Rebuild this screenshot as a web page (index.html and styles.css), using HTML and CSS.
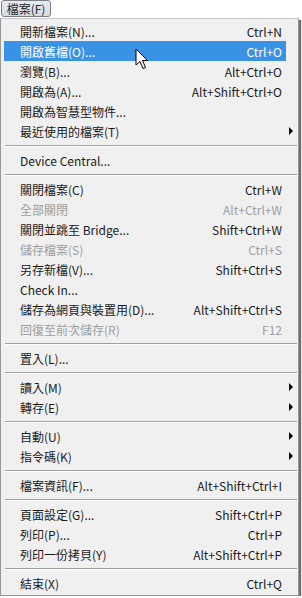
FILE: index.html
```html
<!DOCTYPE html>
<html lang="zh-Hant">
<head>
    <meta charset="UTF-8">
    <title>檔案</title>
    <link rel="stylesheet" href="styles.css">
</head>
<body>
    <div class="menubar">
        <span class="menu-title">檔案(F)</span>
    </div>

    <div class="menu">
        <div class="item"><span class="label">開新檔案(N)...</span><span class="key">Ctrl+N</span></div>
        <div class="item active"><span class="label">開啟舊檔(O)...</span><span class="key">Ctrl+O</span></div>
        <div class="item"><span class="label">瀏覽(B)...</span><span class="key">Alt+Ctrl+O</span></div>
        <div class="item"><span class="label">開啟為(A)...</span><span class="key">Alt+Shift+Ctrl+O</span></div>
        <div class="item"><span class="label">開啟為智慧型物件...</span></div>
        <div class="item sub"><span class="label">最近使用的檔案(T)</span></div>
        <div class="sep"></div>
        <div class="item"><span class="label">Device Central...</span></div>
        <div class="sep"></div>
        <div class="item"><span class="label">關閉檔案(C)</span><span class="key">Ctrl+W</span></div>
        <div class="item disabled"><span class="label">全部關閉</span><span class="key">Alt+Ctrl+W</span></div>
        <div class="item"><span class="label">關閉並跳至 Bridge...</span><span class="key">Shift+Ctrl+W</span></div>
        <div class="item disabled"><span class="label">儲存檔案(S)</span><span class="key">Ctrl+S</span></div>
        <div class="item"><span class="label">另存新檔(V)...</span><span class="key">Shift+Ctrl+S</span></div>
        <div class="item"><span class="label">Check In...</span></div>
        <div class="item"><span class="label">儲存為網頁與裝置用(D)...</span><span class="key">Alt+Shift+Ctrl+S</span></div>
        <div class="item disabled"><span class="label">回復至前次儲存(R)</span><span class="key">F12</span></div>
        <div class="sep"></div>
        <div class="item"><span class="label">置入(L)...</span></div>
        <div class="sep"></div>
        <div class="item sub"><span class="label">讀入(M)</span></div>
        <div class="item sub"><span class="label">轉存(E)</span></div>
        <div class="sep"></div>
        <div class="item sub"><span class="label">自動(U)</span></div>
        <div class="item sub"><span class="label">指令碼(K)</span></div>
        <div class="sep"></div>
        <div class="item"><span class="label">檔案資訊(F)...</span><span class="key">Alt+Shift+Ctrl+I</span></div>
        <div class="sep"></div>
        <div class="item"><span class="label">頁面設定(G)...</span><span class="key">Shift+Ctrl+P</span></div>
        <div class="item"><span class="label">列印(P)...</span><span class="key">Ctrl+P</span></div>
        <div class="item"><span class="label">列印一份拷貝(Y)</span><span class="key">Alt+Shift+Ctrl+P</span></div>
        <div class="sep"></div>
        <div class="item"><span class="label">結束(X)</span><span class="key">Ctrl+Q</span></div>

        <!-- mouse pointer over the active item -->
        <svg class="cursor" width="14" height="22" viewBox="0 0 14 22">
            <path d="M1 1 L1 17 L5 13.5 L8 20.5 L10.5 19.5 L7.5 12.5 L12.5 12.5 Z" fill="#fff" stroke="#000" stroke-width="1" stroke-linejoin="miter"/>
        </svg>
    </div>
</body>
</html>
```

FILE: styles.css
```css
body {
    margin: 0;
    padding: 0;
    background-color: #fff;
    font-family: "Noto Sans CJK TC", "Noto Sans", sans-serif;
    font-size: 12px;
    color: #1a1a1a;
}
.menubar {
    height: 18px;
    padding-left: 1px;
}
.menu-title {
    display: inline-block;
    box-sizing: border-box;
    width: 50px;
    height: 17px;
    line-height: 15px;
    text-align: center;
    border: 1px solid #7b7f86;
    border-radius: 3px;
    background: linear-gradient(#e9edf2, #d3d9e1);
    color: #2b2b2b;
}
.menu {
    position: relative;
    width: 299px;
    box-sizing: border-box;
    background-color: #f0f0f0;
    border: 1px solid #979797;
    border-top-color: #c8c8c8;
    padding: 2px 0 2px 0;
    box-shadow: 2px 2px 1px #6e6e6e;
}
.item {
    display: flex;
    align-items: center;
    height: 20px;
    margin: 0 12px 0 3px;
    padding: 0 4px 0 16px;
    position: relative;
}
.item .label {
    flex: 1;
    white-space: nowrap;
}
.item .key {
    white-space: nowrap;
}
.item.active {
    background-color: #3a92e4;
    color: #fff;
}
.item.disabled {
    color: #9e9e9e;
}
.item.sub::after {
    content: "";
    position: absolute;
    right: -7px;
    top: 6px;
    border-left: 4px solid #000;
    border-top: 4px solid transparent;
    border-bottom: 4px solid transparent;
}
.sep {
    height: 1px;
    margin: 4px 1px 4px 4px;
    background-color: #a0a0a0;
    border-bottom: 1px solid #fff;
    margin-bottom: 3px;
}
.cursor {
    position: absolute;
    left: 134px;
    top: 29px;
}
```
